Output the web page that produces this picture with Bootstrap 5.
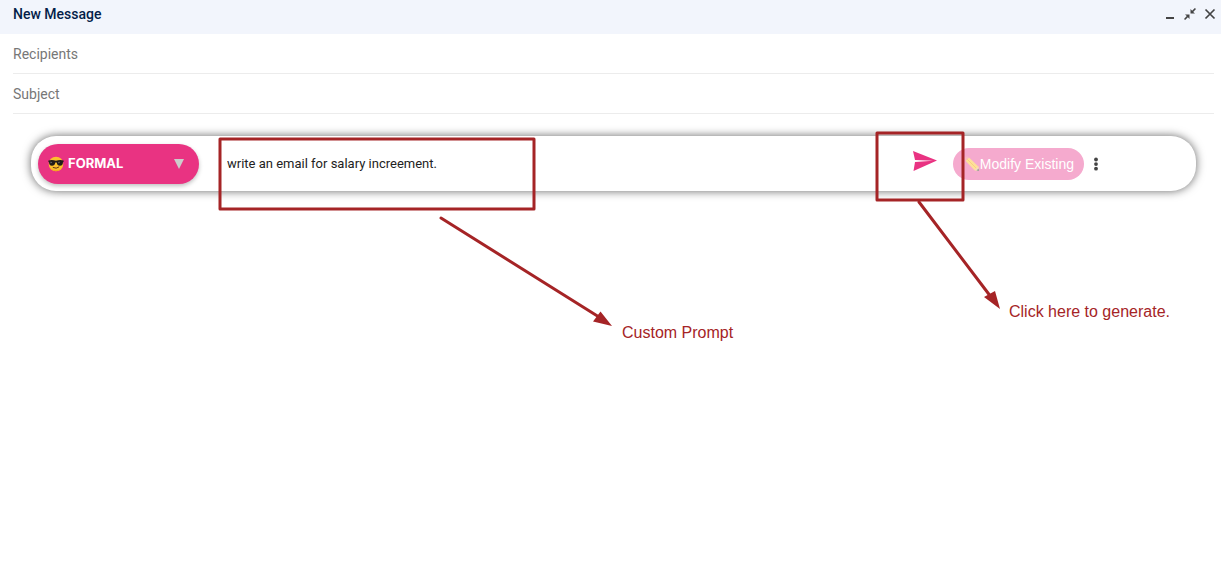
<!DOCTYPE html>
<html lang="en">
<head>
<meta charset="utf-8">
<meta name="viewport" content="width=device-width, initial-scale=1">
<title>New Message</title>
<link href="https://cdn.jsdelivr.net/npm/bootstrap@5.3.0/dist/css/bootstrap.min.css" rel="stylesheet">
<style>
  body { font-family: Roboto, "Liberation Sans", sans-serif; font-size: 14px; color: #222; background: #fff; }
  .compose { min-height: 100vh; overflow: hidden; }
  .title-bar { height: 34px; background: #f2f5fc; padding: 0 5px 6px 13px; }
  .title-bar h1 { font-size: 14px; line-height: 20px; font-weight: 500; color: #041e49; }
  .tool-btn { border: 0; background: none; padding: 0; line-height: 0; color: #444; }
  .fields { padding: 0 7px 0 13px; }
  .field { height: 40px; border: 0; border-bottom: 1px solid #ececec; border-radius: 0; padding: 0; font-size: 14px; color: #222; background: none; }
  .field::placeholder { color: #777; opacity: 1; }
  .prompt-bar { height: 55px; margin: 22px 25px 0 31px; padding: 0 96px 0 7px; border-radius: 25px; background: #fff; box-shadow: 0 0 10px rgba(0,0,0,.6); }
  .tone { width: 161px; margin-right: 20px; }
  .tone select { height: 40px; border: 0; border-radius: 20px; background: #e93382; color: #fff; font-family: Inter, sans-serif; font-size: 13px; font-weight: 700; padding: 0 30px 0 30px; appearance: none; box-shadow: 0 2px 4px rgba(0,0,0,.25); }
  .tone svg { pointer-events: none; top: 12px; }
  .tone .face { left: 10px; }
  .tone .caret { right: 14px; }
  .prompt-input { border: 0; padding: 0 0 0 8px; font-size: 13px; color: #222; background: none; min-width: 0; height: 40px; }
  .send { margin: 0 15px 6px 0; }
  .modify { height: 32px; border: 0; border-radius: 16px; background: #f5aace; color: #fff; padding: 0 10px 0 11px; font-family: "Liberation Sans", sans-serif; font-size: 14px; line-height: 32px; }
  .notes { inset: 0; pointer-events: none; }
  .note { font-family: "Liberation Sans", sans-serif; font-size: 16px; line-height: 20px; color: #a52426; white-space: nowrap; }
  .note-prompt { left: 622px; top: 323px; }
  .note-send { left: 1009px; top: 302px; }
</style>
</head>
<body>
<main class="compose position-relative">
  <header class="title-bar d-flex align-items-center justify-content-between">
    <h1 class="m-0">New Message</h1>
    <div class="d-flex gap-2">
      <button class="tool-btn" type="button" aria-label="Minimize"><svg width="12" height="12" viewBox="0 0 12 12"><path d="M2 9h8v2H2z" fill="currentColor"/></svg></button>
      <button class="tool-btn" type="button" aria-label="Exit full screen"><svg width="12" height="12" viewBox="0 0 12 12" fill="currentColor"><path d="M6.500 1v4.500H11L9.200 3.900 12 1.100 10.900 0 8.100 2.800zM5.500 11V6.500H1l1.800 1.600L0 10.900 1.100 12l2.800-2.800z"/></svg></button>
      <button class="tool-btn" type="button" aria-label="Close"><svg width="12" height="12" viewBox="0 0 12 12"><path d="M1.500 1.500l9 9m0-9l-9 9" stroke="currentColor" stroke-width="1.700"/></svg></button>
    </div>
  </header>

  <form>
    <div class="fields">
      <input class="field d-block w-100" type="text" placeholder="Recipients" aria-label="Recipients">
      <input class="field d-block w-100" type="text" placeholder="Subject" aria-label="Subject">
    </div>

    <div class="prompt-bar d-flex align-items-center">
      <div class="tone position-relative flex-shrink-0">
        <select class="w-100 d-block" aria-label="Tone"><option>FORMAL</option><option>CASUAL</option></select>
        <svg class="face position-absolute" width="16" height="16" viewBox="0 0 16 16"><circle cx="8" cy="8" r="7.300" fill="#fbc02d"/><path d="M2 12a7.300 7.300 0 0 0 12 0 9 9 0 0 1-12 0z" fill="#f2a01d"/><path d="M.4 4.500q3.800-.9 7.600.3 3.800-1.200 7.600-.3v1.300l-.6.4q-.2 3.600-3 3.600-2.800 0-3.300-3.300h-1.400Q6.800 9.800 4 9.800 1.200 9.800 1 6.200l-.6-.4z" fill="#211c18"/><path d="M2.300 5.800l2 .1-1.500 1.600zm7.900.1l2-.1-1.500 1.700z" fill="#777"/><path d="M5.200 11.600q3.200 1.600 5.700-.5" fill="none" stroke="#633512" stroke-linecap="round"/></svg>
        <svg class="caret position-absolute" width="12" height="16" viewBox="0 0 12 16"><path d="M1 3h10L6 13z" fill="#ccc"/></svg>
      </div>
      <input class="prompt-input flex-grow-1" type="text" value="write an email for salary increement." aria-label="Custom prompt">
      <button class="tool-btn send" type="button" aria-label="Generate"><svg width="26" height="22" viewBox="0 0 26 22"><path d="M1 1l24 9.500L1.500 21 3 12l18-1.200L3 10z" fill="#e93382"/></svg></button>
      <button class="modify d-flex align-items-center flex-shrink-0" type="button"><svg width="16" height="16" viewBox="0 0 16 16"><path d="M1.500 4.700L5 1.500l9.300 9 .8 4.600-4.600-.9z" fill="#fde09a"/><path d="M1.500 4.700L5 1.500 3.600.6Q2 .2 1 1.700q-.6 1.300.5 3z" fill="#f7b9c0"/><path d="M3.300 3.300l9 9" stroke="#fbd07e"/><path d="M14.300 10.500l.8 4.600-4.600-.9z" fill="#f5d9c0"/><path d="M14.600 12.600l.5 2.500-2.600-.5z" fill="#999"/></svg>Modify Existing</button>
      <button class="tool-btn ms-2" type="button" aria-label="More options"><svg width="8" height="14" viewBox="0 0 8 14" fill="#444"><circle cx="4" cy="2.500" r="1.900"/><circle cx="4" cy="7.100" r="1.900"/><circle cx="4" cy="11.700" r="1.900"/></svg></button>
    </div>
  </form>

  <div class="notes position-absolute">
    <svg class="d-block" width="1221" height="400" viewBox="0 0 1221 400" fill="none" stroke="#a52426" stroke-width="3" stroke-linejoin="round" stroke-linecap="round" aria-hidden="true">
      <path d="M220 139h314v70H220zM877 133h86v67h-86z"/>
      <path d="M441 218l158 99M919 202l72 95"/>
      <path d="M612 326l-19-4.500 7.500-10zM1000 309l-16-12 11-6z" fill="#a52426" stroke="none"/>
    </svg>
    <span class="note note-prompt position-absolute">Custom Prompt</span>
    <span class="note note-send position-absolute">Click here to generate.</span>
  </div>
</main>
<script src="https://cdn.jsdelivr.net/npm/bootstrap@5.3.0/dist/js/bootstrap.bundle.min.js"></script>
</body>
</html>
